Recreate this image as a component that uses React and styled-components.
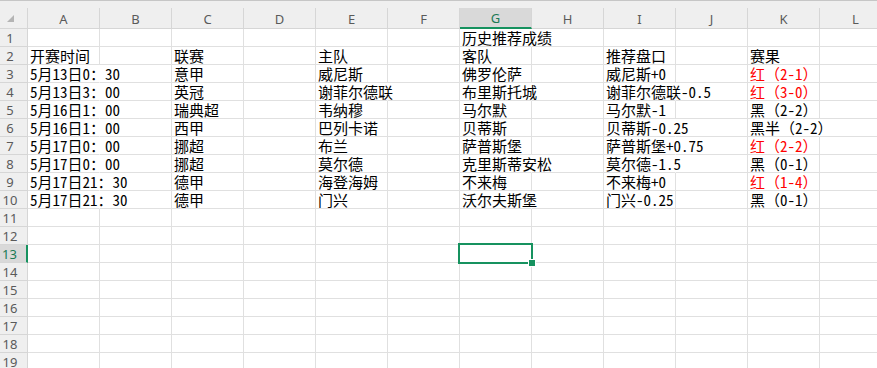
import React from 'react';
import styled, { createGlobalStyle, css } from 'styled-components';

const GREEN = '#16925f';
const GREEN_TEXT = '#1b7a55';
const GRID = '#e0e0e0';
const HEAD_LINE = '#d6d6d6';

const Global = createGlobalStyle`
  html, body { margin: 0; padding: 0; background: #fff; overflow: hidden; }
  body { width: 877px; height: 368px; }
`;

const Sheet = styled.div`
  position: relative;
  width: 877px;
  height: 368px;
  overflow: hidden;
  background: #fff;
`;

const HeaderBar = styled.div`
  display: flex;
  align-items: flex-end;
  width: max-content;
  height: 29px;
  box-sizing: border-box;
  background: #efefef;
  border-top: 1px solid #c6c6c6;
`;

const Corner = styled.div`
  width: 28px;
  height: 21px;
  box-sizing: border-box;
  border-right: 1px solid ${HEAD_LINE};
  border-bottom: 1px solid ${HEAD_LINE};
  display: flex;
  align-items: center;
  padding: 1px 0 0 7px;
`;

const ColHead = styled.div`
  width: 72px;
  height: 21px;
  flex: none;
  box-sizing: border-box;
  border-right: 1px solid ${HEAD_LINE};
  border-bottom: 1px solid ${HEAD_LINE};
  display: flex;
  align-items: center;
  justify-content: center;
  padding-top: 1px;
  font-family: "Noto Sans", "Open Sans", sans-serif;
  font-size: 13px;
  color: #5a5a5a;
  ${p => p.$active && css`
    background: #d9d9d9;
    border-bottom: 2px solid ${GREEN};
    color: ${GREEN_TEXT};
  `}
`;

const Row = styled.div`
  display: flex;
  width: max-content;
  height: 18px;
`;

const RowHead = styled.div`
  width: 28px;
  flex: none;
  box-sizing: border-box;
  background: #efefef;
  border-right: 1px solid ${HEAD_LINE};
  border-bottom: 1px solid ${HEAD_LINE};
  padding: 1px 7px 0 0;
  text-align: center;
  font-family: "Noto Sans", "Open Sans", sans-serif;
  font-size: 13px;
  line-height: 16px;
  color: #5a5a5a;
  ${p => p.$active && css`
    background: #d9d9d9;
    border-right: 2px solid ${GREEN};
    color: ${GREEN_TEXT};
  `}
`;

const Cell = styled.div`
  width: 72px;
  flex: none;
  box-sizing: border-box;
  border-right: 1px solid ${p => (p.$spill ? 'transparent' : GRID)};
  border-bottom: 1px solid ${GRID};
  padding-left: 2px;
  white-space: nowrap;
  overflow: visible;
  font-family: "Noto Sans CJK SC", sans-serif;
  font-size: 15px;
  line-height: 17px;
  color: ${p => (p.$red ? '#ff0000' : '#000')};
  position: relative;
  z-index: ${p => (p.$spill ? 1 : 0)};
`;

const HalfWidth = styled.span`
  font-feature-settings: "hwid" 1;
`;

const Selection = styled.div`
  position: absolute;
  left: 458px;
  top: 243px;
  width: 75px;
  height: 21px;
  box-sizing: border-box;
  border: 2px solid ${GREEN};
  z-index: 5;
`;

const Handle = styled.div`
  position: absolute;
  left: 68px;
  top: 14px;
  width: 8px;
  height: 8px;
  box-sizing: border-box;
  background: ${GREEN};
  border: 1px solid #fff;
`;

const COLS = ['A', 'B', 'C', 'D', 'E', 'F', 'G', 'H', 'I', 'J', 'K', 'L'];
const ACTIVE_COL = 'G';
const ACTIVE_ROW = 13;

const r = t => ({ t, red: true });

const DATA = {
  1: { G: '历史推荐成绩' },
  2: { A: '开赛时间', C: '联赛', E: '主队', G: '客队', I: '推荐盘口', K: '赛果' },
  3: { A: '5月13日0：30', C: '意甲', E: '威尼斯', G: '佛罗伦萨', I: '威尼斯+0', K: r('红（2-1）') },
  4: { A: '5月13日3：00', C: '英冠', E: '谢菲尔德联', G: '布里斯托城', I: '谢菲尔德联-0.5', K: r('红（3-0）') },
  5: { A: '5月16日1：00', C: '瑞典超', E: '韦纳穆', G: '马尔默', I: '马尔默-1', K: '黑（2-2）' },
  6: { A: '5月16日1：00', C: '西甲', E: '巴列卡诺', G: '贝蒂斯', I: '贝蒂斯-0.25', K: '黑半（2-2）' },
  7: { A: '5月17日0：00', C: '挪超', E: '布兰', G: '萨普斯堡', I: '萨普斯堡+0.75', K: r('红（2-2）') },
  8: { A: '5月17日0：00', C: '挪超', E: '莫尔德', G: '克里斯蒂安松', I: '莫尔德-1.5', K: '黑（0-1）' },
  9: { A: '5月17日21：30', C: '德甲', E: '海登海姆', G: '不来梅', I: '不来梅+0', K: r('红（1-4）') },
  10: { A: '5月17日21：30', C: '德甲', E: '门兴', G: '沃尔夫斯堡', I: '门兴-0.25', K: '黑（0-1）' },
};

const textWidth = s => [...s].reduce((a, c) => a + (c.charCodeAt(0) < 256 ? 7.5 : 15), 0);

// split text into runs of ASCII (rendered with half-width glyphs) and other text
const runs = s => s.match(/[\x20-\x7e]+|[^\x20-\x7e]+/g) || [];

function CellText({ text }) {
  return runs(text).map((part, i) =>
    /^[\x20-\x7e]+$/.test(part) ? <HalfWidth key={i}>{part}</HalfWidth> : <React.Fragment key={i}>{part}</React.Fragment>
  );
}

function CornerMark() {
  return (
    <svg width="7" height="7" viewBox="0 0 7 7">
      <polygon points="7,0 7,7 0,7" fill="#b4b4b4" />
    </svg>
  );
}

export default function App() {
  const rows = Array.from({ length: 19 }, (_, i) => i + 1);
  return (
    <>
      <Global />
      <Sheet>
        <HeaderBar>
          <Corner><CornerMark /></Corner>
          {COLS.map(c => (
            <ColHead key={c} $active={c === ACTIVE_COL}>{c}</ColHead>
          ))}
        </HeaderBar>
        {rows.map(n => (
          <Row key={n}>
            <RowHead $active={n === ACTIVE_ROW}>{n}</RowHead>
            {COLS.map(c => {
              const v = DATA[n] && DATA[n][c];
              const t = v ? (typeof v === 'string' ? v : v.t) : '';
              const red = v && typeof v === 'object' && v.red;
              const spill = t && textWidth(t) > 69;
              return (
                <Cell key={c} $spill={spill} $red={red}>
                  <CellText text={t} />
                </Cell>
              );
            })}
          </Row>
        ))}
        <Selection><Handle /></Selection>
      </Sheet>
    </>
  );
}
